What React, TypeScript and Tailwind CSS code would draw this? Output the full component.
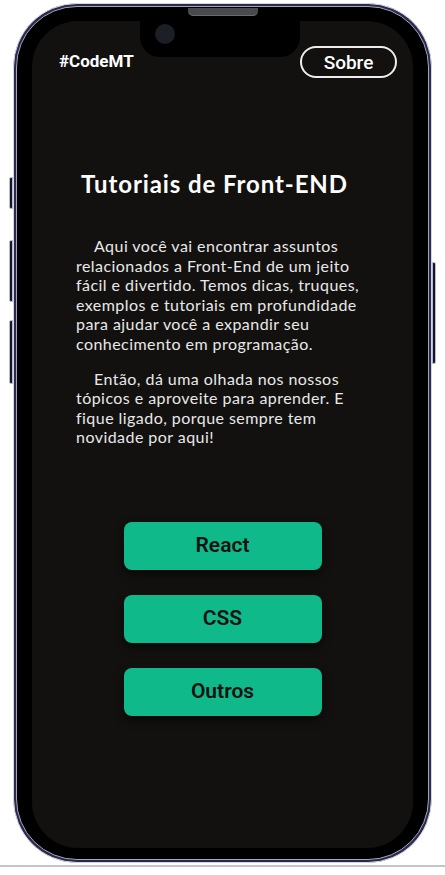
import React from 'react';

const topics = ['React', 'CSS', 'Outros'];

const App: React.FC = () => {
  return (
    <div className="relative w-[445px] h-[875px] bg-white overflow-hidden">
      {/* side buttons */}
      <div className="absolute left-[9px] top-[177px] w-[4px] h-[32px] rounded-l-[2px] bg-[#14142a] border border-[#b9bbd0]" />
      <div className="absolute left-[9px] top-[240px] w-[4px] h-[62px] rounded-l-[2px] bg-[#14142a] border border-[#b9bbd0]" />
      <div className="absolute left-[9px] top-[320px] w-[4px] h-[64px] rounded-l-[2px] bg-[#14142a] border border-[#b9bbd0]" />
      <div className="absolute left-[432px] top-[262px] w-[4px] h-[102px] rounded-r-[2px] bg-[#14142a] border border-[#b9bbd0]" />

      <div className="pt-[3px] px-[13px]">
        <div className="relative h-[860px] rounded-[64px] border-[1.5px] border-[#d3d5e4] bg-[#2a2b4c] p-[2px]">
          <div className="h-full rounded-[61px] border border-[#a4a6c0] bg-black px-[15px] pt-[14px] pb-[11px]">
            <div className="h-full rounded-[46px] bg-[#121110] flex flex-col">
              <header className="flex items-center justify-between pl-[27px] pr-[16px] pt-[25px]">
                <span className="text-white font-bold text-[17px] font-['Roboto',sans-serif]">#CodeMT</span>
                <button className="h-[32px] w-[97px] rounded-full border-2 border-[#ededed] text-white text-[19px] font-medium font-['Roboto',sans-serif] leading-none">
                  Sobre
                </button>
              </header>

              <main className="flex flex-col font-['Lato',sans-serif]">
                <h1 className="mt-[90px] ml-[49px] text-white text-[24px] font-bold leading-[32px] tracking-[0.9px]">
                  Tutoriais de Front-END
                </h1>
                <div className="mt-[36px] ml-[44px] w-[300px] text-[#e8e8e8] text-[16px] leading-[19.6px] tracking-[0.45px]">
                  <p className="indent-[18px]">
                    Aqui você vai encontrar assuntos relacionados a Front-End de um jeito fácil e divertido. Temos dicas, truques, exemplos e tutoriais em profundidade para ajudar você a expandir seu conhecimento em programação.
                  </p>
                  <p className="indent-[18px] mt-[15px]">
                    Então, dá uma olhada nos nossos tópicos e aproveite para aprender. E fique ligado, porque sempre tem novidade por aqui!
                  </p>
                </div>

                <div className="mt-[75px] flex flex-col items-center gap-[25px]">
                  {topics.map((t) => (
                    <button
                      key={t}
                      className="w-[198px] h-[48px] rounded-[8px] bg-[#10b98a] text-[#111111] text-[21px] font-semibold font-['Roboto',sans-serif] shadow-[0_4px_10px_rgba(0,0,0,0.6)]"
                    >
                      {t}
                    </button>
                  ))}
                </div>
              </main>
            </div>
          </div>

          {/* notch */}
          <div className="absolute left-[126px] top-[4px] w-[160px] h-[49px] rounded-b-[20px] bg-black">
            <div className="absolute left-[15px] top-[16px] w-[20px] h-[20px] rounded-full bg-[#1c1f26]" />
          </div>
          {/* speaker */}
          <div className="absolute left-[174px] top-[4px] w-[70px] h-[8px] rounded-b-[5px] bg-[#4a4a4e] border-b border-[#6a6a70]" />
        </div>
      </div>

      {/* ground line */}
      <div className="mt-[2px] w-full h-[2px] bg-[#c4c5cc]" />
    </div>
  );
};

export default App;
